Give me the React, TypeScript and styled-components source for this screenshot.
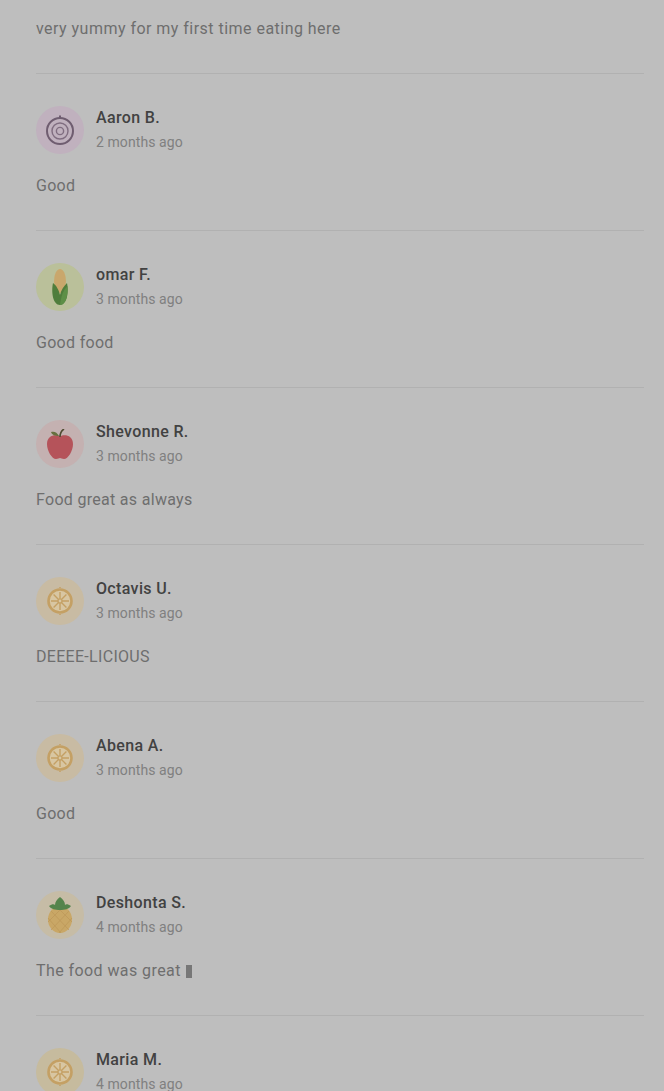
import React from "react";
import styled, { createGlobalStyle } from "styled-components";

const Global = createGlobalStyle`
  html, body { margin: 0; padding: 0; height: 100%; background: #bebebe; overflow: hidden; }
  #root { height: 1091px; overflow: hidden; }
`;

const Page = styled.main`
  height: 1091px;
  overflow: hidden;
  box-sizing: border-box;
  padding: 18px 20px 0 36px;
  background: #bebebe;
  font-family: Roboto, "Liberation Sans", sans-serif;
`;

const Comment = styled.p<{ $spacing?: number }>`
  margin: 0;
  font-size: 16px;
  line-height: 22px;
  letter-spacing: ${(p) => p.$spacing ?? 0.3}px;
  color: #6e6e6e;
`;

const MissingGlyph = styled.span`
  display: inline-block;
  width: 6px;
  height: 13px;
  margin-left: 1px;
  vertical-align: -2px;
  background: #777777;
`;

const Review = styled.article`
  height: 157px;
  box-sizing: border-box;
  padding-top: 32px;
  border-top: 1px solid #b1b1b1;
`;

const Lead = styled.div`
  height: 34px;
  margin-bottom: 21px;
`;

const Head = styled.header`
  display: flex;
  align-items: center;
  gap: 12px;
  height: 48px;
  margin-bottom: 21px;
`;

const Avatar = styled.div<{ $bg: string }>`
  width: 48px;
  height: 48px;
  flex: none;
  display: flex;
  align-items: center;
  justify-content: center;
  border-radius: 50%;
  background: ${(p) => p.$bg};
`;

const Meta = styled.div`
  display: flex;
  flex-direction: column;
  gap: 3px;
  margin-top: -1px;
`;

const Name = styled.div`
  font-size: 16px;
  font-weight: 500;
  line-height: 22px;
  letter-spacing: 0.35px;
  color: #424242;
`;

const Time = styled.div`
  font-size: 14px;
  line-height: 20px;
  letter-spacing: 0.08px;
  color: #808080;
`;

const Onion = () => (
  <svg width="32" height="32" viewBox="0 0 32 32" fill="none" stroke="#6f5d70">
    <circle cx="16" cy="17" r="13" strokeWidth="2" />
    <circle cx="16" cy="17" r="8" strokeWidth="1.4" opacity="0.8" />
    <circle cx="16" cy="17" r="3.6" strokeWidth="1.4" opacity="0.8" />
    <path d="M16 4V1.5" strokeWidth="2" />
  </svg>
);

const Corn = () => (
  <svg width="20" height="36" viewBox="0 0 20 36">
    <ellipse cx="10" cy="12" rx="6" ry="12" fill="#c9a76c" />
    <path d="M3 14c3 2 6 7 7 12 1-5 4-9 7-12 2 9 0 22-7 22S1 23 3 14z" fill="#4f7d3c" />
    <path d="M10 36c6 0 8-10 7.500-19C13 21 11 28 10 36z" fill="#5d8f46" />
  </svg>
);

const Apple = () => (
  <svg width="28" height="30" viewBox="0 0 28 30">
    <path d="M14 7.500C10 5 1 6 1 15c0 7 5 15 9 15 2 0 3-1 4-1s2 1 4 1c4 0 9-8 9-15 0-9-9-10-13-7.500z" fill="#b5535a" />
    <path d="M14 8c0-3 1-6 4-8" stroke="#4e4a30" strokeWidth="1.6" fill="none" />
    <path d="M13 7C11 3 8 2 5 3c1 3 4 4 8 4z" fill="#66703f" />
  </svg>
);

const Citrus = () => (
  <svg width="28" height="28" viewBox="0 0 28 28" fill="none" stroke="#c4a064">
    <circle cx="14" cy="14" r="11.500" fill="#d8c6a2" strokeWidth="2.600" />
    <path d="M14 5v18M5 14h18M7.600 7.600l12.800 12.800M20.400 7.600 7.600 20.400" strokeWidth="1.400" />
    <circle cx="14" cy="14" r="2" fill="#d8c6a2" strokeWidth="1.200" />
    <path d="M14 1v-1M14 27v1" strokeWidth="1.500" />
  </svg>
);

const Pineapple = () => (
  <svg width="26" height="36" viewBox="0 0 26 36">
    <ellipse cx="13" cy="22.500" rx="12" ry="13.500" fill="#c9a766" />
    <path d="M4 14 22 33M10 10l15 15M1 21l13 15M22 14 4 33M16 10 1 25M25 21 12 36" stroke="#bb9758" strokeWidth="0.700" />
    <path d="M2 9c3-2 5-2 6-1 0-3 2-6 5-8 3 2 5 5 5 8 1-1 3-1 6 1-2 3-6 4-11 4S4 12 2 9z" fill="#54844c" />
  </svg>
);

type Item = { name: string; time: string; text: React.ReactNode; spacing?: number; bg: string; icon: React.ReactNode };

const items: Item[] = [
  { name: "Aaron B.", time: "2 months ago", text: "Good", bg: "#c0b1be", icon: <Onion /> },
  { name: "omar F.", time: "3 months ago", text: "Good food", bg: "#bac09a", icon: <Corn /> },
  { name: "Shevonne R.", time: "3 months ago", text: "Food great as always", bg: "#c4b1b1", icon: <Apple /> },
  { name: "Octavis U.", time: "3 months ago", text: "DEEEE-LICIOUS", bg: "#c8bba3", icon: <Citrus /> },
  { name: "Abena A.", time: "3 months ago", text: "Good", bg: "#c8bba3", icon: <Citrus /> },
  {
    name: "Deshonta S.",
    time: "4 months ago",
    text: (
      <>
        The food was great <MissingGlyph />
      </>
    ),
    spacing: 0.42,
    bg: "#c6bca6",
    icon: <Pineapple />,
  },
  { name: "Maria M.", time: "4 months ago", text: "", bg: "#c6bb9e", icon: <Citrus /> },
];

export default function App() {
  return (
    <Page>
      <Global />
      <Lead>
        <Comment $spacing={0.47}>very yummy for my first time eating here</Comment>
      </Lead>
      {items.map((r) => (
        <Review key={r.name}>
          <Head>
            <Avatar $bg={r.bg}>{r.icon}</Avatar>
            <Meta>
              <Name>{r.name}</Name>
              <Time>{r.time}</Time>
            </Meta>
          </Head>
          <Comment $spacing={r.spacing}>{r.text}</Comment>
        </Review>
      ))}
    </Page>
  );
}
